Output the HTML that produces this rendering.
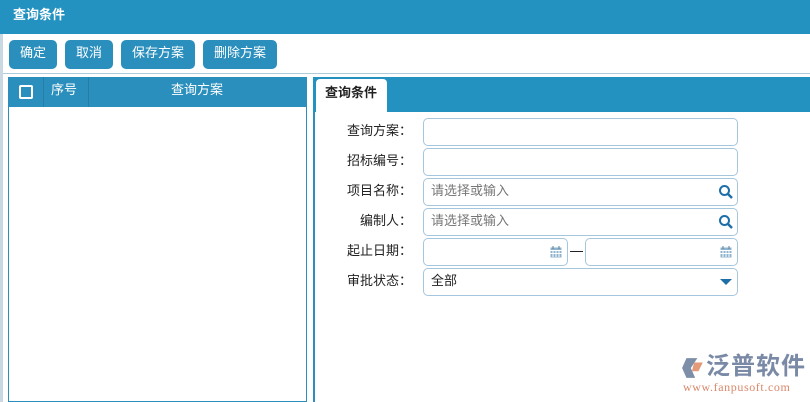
<!DOCTYPE html>
<html><head><meta charset="utf-8"><style>
*{box-sizing:border-box;margin:0;padding:0}
body{width:810px;height:402px;overflow:hidden;background:#fff;font-family:"Liberation Sans","Noto Sans CJK SC",sans-serif;font-size:13px;position:relative;color:#222;line-height:16px}
.a{position:absolute}
.hdr{left:0;top:0;width:810px;height:34px;background:#2492c0;color:#fff;font-weight:bold;padding:7px 0 0 13px;font-size:13px}
.lb{left:0;top:34px;width:3px;height:368px;background:#c9d9e4}
.btn{top:40px;height:29px;background:#2a8fbd;border-radius:5px;color:#fff;text-align:center;line-height:26px;font-size:13px}
.sep{left:3px;top:73px;width:807px;height:1px;background:#aecbdc}
.lp{left:8px;top:77px;width:299px;height:325px;border:1px solid #2a8fbd}
.th{left:8px;top:77px;width:299px;height:30px;background:#2a8fbd;color:#fff}
.rp{left:313px;top:77px;width:497px;height:325px;border-left:2px solid #2a8fbd}
.tabbar{left:313px;top:77px;width:497px;height:35px;background:#2492c0}
.tab{left:316px;top:79px;width:71px;height:33px;background:#fff;border-radius:4px 4px 0 0;font-weight:bold;padding:6px 0 0 9px;font-size:13px}
.lab{left:330px;width:82px;text-align:right;font-size:13px;color:#222}
.in{left:423px;width:315px;height:28px;border:1px solid #a6c6de;border-radius:5px;padding:4px 0 0 7px;color:#777;font-size:13px}
</style></head><body>
<div class="a hdr">查询条件</div>
<div class="a lb"></div>
<div class="a btn" style="left:9px;width:48px">确定</div>
<div class="a btn" style="left:65px;width:48px">取消</div>
<div class="a btn" style="left:121px;width:74px">保存方案</div>
<div class="a btn" style="left:203px;width:74px">删除方案</div>
<div class="a sep"></div>
<div class="a lp"></div>
<div class="a th">
 <div class="a" style="left:11px;top:8px;width:14px;height:14px;border:2px solid #fff;border-radius:2px"></div>
 <div class="a" style="left:35px;top:0;width:1px;height:30px;background:#237fa8"></div>
 <div class="a" style="left:43px;top:5px">序号</div>
 <div class="a" style="left:80px;top:0;width:1px;height:30px;background:#237fa8"></div>
 <div class="a" style="left:163px;top:5px">查询方案</div>
</div>
<div class="a rp"></div>
<div class="a tabbar"></div>
<div class="a tab">查询条件</div>
<div class="a lab" style="top:123px">查询方案：</div>
<div class="a in" style="top:118px"></div>
<div class="a lab" style="top:153px">招标编号：</div>
<div class="a in" style="top:148px"></div>
<div class="a lab" style="top:183px">项目名称：</div>
<div class="a in" style="top:178px">请选择或输入</div>
<svg class="a" style="left:718px;top:184px" width="16" height="16" viewBox="0 0 16 16"><circle cx="6.5" cy="6.5" r="4.5" fill="none" stroke="#1e6fa8" stroke-width="2"/><path d="M10 10L14 14" stroke="#1e6fa8" stroke-width="2.5"/></svg>
<div class="a lab" style="top:213px">编制人：</div>
<div class="a in" style="top:208px">请选择或输入</div>
<svg class="a" style="left:718px;top:214px" width="16" height="16" viewBox="0 0 16 16"><circle cx="6.5" cy="6.5" r="4.5" fill="none" stroke="#1e6fa8" stroke-width="2"/><path d="M10 10L14 14" stroke="#1e6fa8" stroke-width="2.5"/></svg>
<div class="a lab" style="top:243px">起止日期：</div>
<div class="a in" style="top:238px;width:145px"></div>
<div class="a" style="left:570px;top:251px;width:13px;height:1px;background:#222"></div>
<div class="a in" style="top:238px;left:585px;width:153px"></div>
<svg class="a" style="left:550px;top:246px" width="12" height="12" viewBox="0 0 12 12"><rect x="0.5" y="1.5" width="11" height="10" fill="#8fb3cc"/><path d="M0.5 4.5h11M3 4v7M6 4v7M9 4v7M0.5 7.5h11" stroke="#fff" stroke-width="1"/><path d="M3 0v3M9 0v3" stroke="#5a7f9a"/></svg>
<svg class="a" style="left:720px;top:246px" width="12" height="12" viewBox="0 0 12 12"><rect x="0.5" y="1.5" width="11" height="10" fill="#8fb3cc"/><path d="M0.5 4.5h11M3 4v7M6 4v7M9 4v7M0.5 7.5h11" stroke="#fff" stroke-width="1"/><path d="M3 0v3M9 0v3" stroke="#5a7f9a"/></svg>
<div class="a lab" style="top:273px">审批状态：</div>
<div class="a in" style="top:268px;color:#222">全部</div>
<svg class="a" style="left:720px;top:278px" width="12" height="8"><path d="M0 1h12L6 7z" fill="#1e6fa8"/></svg>
<svg class="a" style="left:681px;top:356px" width="24" height="24" viewBox="0 0 22 22"><path d="M5 2h10l-6 9 4 9H5L1 11z" fill="#7d8ea8"/><path d="M12 6h8l-4 8h-6z" fill="#e39a78"/></svg>
<div class="a" style="left:706px;top:350px;font-size:24px;color:#7a8aa6;letter-spacing:1px;font-family:'Noto Sans CJK SC',sans-serif;line-height:28px;font-weight:bold">泛普软件</div>
<div class="a" style="left:683px;top:379px;font-size:12px;color:#d9876a;font-family:'Liberation Serif',serif;letter-spacing:0.6px">www.fanpusoft.com</div>
</body></html>
